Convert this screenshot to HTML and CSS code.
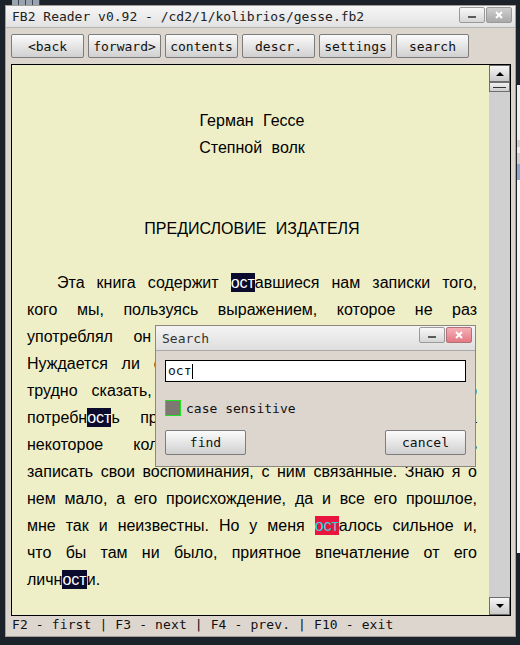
FILE: index.html
```html
<!DOCTYPE html>
<html lang="ru">
<head>
    <meta charset="UTF-8">
    <title>FB2 Reader</title>
    <link rel="stylesheet" href="styles.css">
</head>
<body>

<div class="desk-icons"></div>
<div class="other-window"></div>

<div class="window">
    <div class="titlebar">
        <span class="title">FB2 Reader v0.92 - /cd2/1/kolibrios/gesse.fb2</span>
        <div class="win-btns">
            <span class="wbtn wmin"><i></i></span>
            <span class="wbtn wclose">
                <svg width="8" height="8" viewBox="0 0 8 8"><path d="M1 1L7 7M7 1L1 7" stroke="#fff" stroke-width="2"/></svg>
            </span>
        </div>
    </div>

    <!-- toolbar -->
    <div class="toolbar">
        <button class="btn">&lt;back</button>
        <button class="btn">forward&gt;</button>
        <button class="btn">contents</button>
        <button class="btn">descr.</button>
        <button class="btn">settings</button>
        <button class="btn">search</button>
    </div>

    <!-- book text -->
    <div class="reader">
        <div class="page">
            <p class="center">Герман Гессе</p>
            <p class="center">Степной волк</p>
            <p class="center chapter">ПРЕДИСЛОВИЕ ИЗДАТЕЛЯ</p>
            <div class="para">
                <span class="ln first">Эта книга содержит <span class="hit">ост</span>авшиеся нам записки того,</span>
                <span class="ln">кого мы, пользуясь выражением, которое не раз</span>
                <span class="ln">употреблял он сам, называли «степным волком».</span>
                <span class="ln">Нуждается ли его рукопись в предисловии, или нет,</span>
                <span class="ln">трудно сказать, но я, во всяком случае, испытываю</span>
                <span class="ln">потребн<span class="hit">ост</span>ь приложить к листкам степного волка</span>
                <span class="ln">некоторое количество страниц, где попытаюсь</span>
                <span class="ln">записать свои воспоминания, с ним связанные. Знаю я о</span>
                <span class="ln">нем мало, а его происхождение, да и все его прошлое,</span>
                <span class="ln">мне так и неизвестны. Но у меня <span class="hit current">ост</span>алось сильное и,</span>
                <span class="ln">что бы там ни было, приятное впечатление от его</span>
                <span class="ln end">личн<span class="hit">ост</span>и.</span>
            </div>
        </div>
        <div class="scrollbar">
            <div class="sb-btn"><span class="arrow up"></span></div>
            <div class="sb-thumb"><i></i></div>
            <div class="sb-track"></div>
            <div class="sb-btn down"><span class="arrow dn"></span></div>
        </div>
    </div>

    <div class="status">F2 - first | F3 - next | F4 - prev. | F10 - exit</div>
</div>

<!-- search dialog -->
<div class="dialog">
    <div class="dlg-title">
        <span>Search</span>
        <div class="win-btns">
            <span class="wbtn wmin"><i></i></span>
            <span class="wbtn wclose red">
                <svg width="8" height="8" viewBox="0 0 8 8"><path d="M1 1L7 7M7 1L1 7" stroke="#fff" stroke-width="2"/></svg>
            </span>
        </div>
    </div>
    <div class="dlg-body">
        <div class="field">ост<span class="caret"></span></div>
        <div class="check-row">
            <span class="checkbox"></span>
            <span>case sensitive</span>
        </div>
        <div class="dlg-buttons">
            <button class="btn">find</button>
            <button class="btn">cancel</button>
        </div>
    </div>
</div>

</body>
</html>
```

FILE: styles.css
```css
body {
    margin: 0;
    width: 520px;
    height: 645px;
    overflow: hidden;
    position: relative;
    background-color: #1b2229;
    font-family: "DejaVu Sans Mono", monospace;
    font-size: 13px;
    color: #111;
    padding: 5px 0 0 5px;
    box-sizing: border-box;
}
.desk-icons {
    position: absolute;
    left: 12px;
    top: 0;
    width: 28px;
    height: 5px;
    background: repeating-linear-gradient(90deg, #9aa4b0 0 6px, #3c4652 6px 7px);
}
.other-window {
    position: absolute;
    left: 517px;
    top: 85px;
    width: 3px;
    height: 468px;
    background: linear-gradient(#eeeeee 0 55px, #d8d0c8 55px 62px, #eeeeee 62px 68px, #d8d0c8 68px 79px, #8ca8d0 79px 95px, #f4f4f4 95px);
}
.window {
    width: 511px;
    height: 632px;
    box-sizing: border-box;
    border: 1px solid #a59e97;
    background-color: #ddd6cf;
    display: flex;
    flex-direction: column;
}
.titlebar {
    height: 22px;
    box-sizing: border-box;
    border-bottom: 1px solid #b4b4b4;
    background: linear-gradient(#f6f6f6, #e2e2e2);
    display: flex;
    align-items: center;
    justify-content: space-between;
    padding: 0 3px 0 6px;
}
.title {
    color: #222;
}
.win-btns {
    display: flex;
    gap: 1px;
    align-self: flex-start;
    margin-top: 1px;
}
.wbtn {
    width: 26px;
    height: 16px;
    box-sizing: border-box;
    border: 1px solid #9a9a9a;
    border-radius: 2px;
    background: linear-gradient(#f8f8f8, #d6d6d6);
    display: flex;
    align-items: center;
    justify-content: center;
}
.wmin i {
    display: block;
    width: 8px;
    height: 2px;
    margin-top: 4px;
    background-color: #5a5a5a;
}
.wclose {
    background: linear-gradient(#cfcfcf, #a9a9a9);
}
.wclose.red {
    border-color: #b27078;
    background: linear-gradient(#f6b0b6, #e27884);
}
.toolbar {
    display: flex;
    gap: 4px;
    padding: 6px 0 0 5px;
}
.btn {
    width: 73px;
    height: 24px;
    padding: 0;
    font-family: "DejaVu Sans Mono", monospace;
    font-size: 13px;
    color: #111;
    border: 1px solid #7c7c7c;
    border-radius: 2px;
    background: linear-gradient(#fbfbfb, #d0d0d0);
}
.reader {
    margin: 6px 4px 0 5px;
    height: 552px;
    box-sizing: border-box;
    border: 1px solid #000;
    display: flex;
}
.page {
    flex: 1;
    padding: 42px 12px 0 15px;
    background-color: #efefc7;
    font-family: "Liberation Sans", Arial, sans-serif;
    font-size: 16px;
    line-height: 27px;
    color: #000;
    overflow: hidden;
}
.page p {
    margin: 0;
}
.center {
    text-align: center;
    word-spacing: 5px;
}
.chapter {
    margin-top: 54px !important;
    margin-bottom: 27px !important;
}
.ln {
    display: block;
    white-space: nowrap;
    text-align: justify;
    text-align-last: justify;
}
.ln.first {
    text-indent: 30px;
}
.ln.end {
    text-align-last: left;
}
.hit {
    background-color: #0b0b2e;
    color: #fff;
    padding: 1px 0;
}
.hit.current {
    background-color: #e8163e;
    color: #2ad8e2;
}
.scrollbar {
    width: 21px;
    background-color: #d0d0d0;
    display: flex;
    flex-direction: column;
}
.sb-btn {
    height: 17px;
    box-sizing: border-box;
    border: 1px solid #6e6e6e;
    background: linear-gradient(#f6f6f6, #c9c9c9);
    display: flex;
    align-items: center;
    justify-content: center;
}
.sb-btn.down {
    height: 18px;
}
.arrow {
    width: 0;
    height: 0;
    border-left: 4px solid transparent;
    border-right: 4px solid transparent;
}
.arrow.up {
    border-bottom: 4px solid #000;
}
.arrow.dn {
    border-top: 4px solid #000;
}
.sb-thumb {
    height: 10px;
    box-sizing: border-box;
    border: 1px solid #6e6e6e;
    background: linear-gradient(#f0f0f0, #cdcdcd);
    display: flex;
    align-items: center;
    justify-content: center;
}
.sb-thumb i {
    display: block;
    width: 13px;
    height: 1px;
    background-color: #333;
}
.sb-track {
    flex: 1;
}
.status {
    flex: 1;
    padding-left: 6px;
    line-height: 18px;
    letter-spacing: 0.12px;
    color: #111;
}
.dialog {
    position: absolute;
    left: 155px;
    top: 325px;
    width: 321px;
    height: 142px;
    box-sizing: border-box;
    border: 1px solid #8c8680;
    background-color: #ddd6cf;
}
.dlg-title {
    height: 25px;
    box-sizing: border-box;
    border-bottom: 1px solid #a8a8a8;
    background: linear-gradient(#f4f4f4, #dedede);
    display: flex;
    align-items: center;
    justify-content: space-between;
    padding: 0 3px 0 6px;
    color: #333;
}
.dlg-title .win-btns {
    margin-top: 1px;
}
.dlg-body {
    padding: 9px 9px 0 9px;
}
.field {
    height: 22px;
    box-sizing: border-box;
    border: 1px solid #000;
    background-color: #fff;
    padding-left: 2px;
    line-height: 20px;
    display: flex;
    align-items: center;
}
.caret {
    display: inline-block;
    width: 1px;
    height: 15px;
    margin-left: 1px;
    background-color: #000;
}
.check-row {
    margin-top: 18px;
    display: flex;
    align-items: center;
    gap: 5px;
    height: 16px;
    color: #111;
}
.checkbox {
    width: 16px;
    height: 16px;
    box-sizing: border-box;
    border: 1px solid #22e022;
    background-color: #7d7873;
}
.dlg-buttons {
    margin-top: 14px;
    display: flex;
    justify-content: space-between;
}
.dlg-buttons .btn {
    width: 81px;
    height: 25px;
}
```
